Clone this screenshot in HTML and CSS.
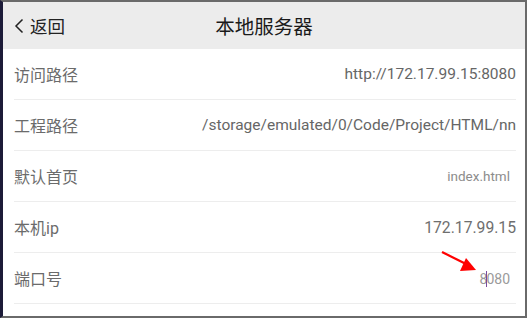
FILE: index.html
```html
<!DOCTYPE html>
<html lang="zh">
<head>
  <meta charset="UTF-8">
  <title>本地服务器</title>
  <link rel="stylesheet" href="styles.css">
</head>
<body>
  <div class="frame">
    <div class="header">
      <div class="back">
        <svg class="back-icon" width="10" height="16" viewBox="0 0 10 16">
          <path d="M8.5 1.5 L2 8 L8.5 14.5" fill="none" stroke="#222" stroke-width="1.5"/>
        </svg>
        <span>返回</span>
      </div>
      <div class="title">本地服务器</div>
    </div>
    <div class="list">
      <div class="row">
        <span class="label">访问路径</span>
        <span class="value">http://172.17.99.15:8080</span>
      </div>
      <div class="row">
        <span class="label">工程路径</span>
        <span class="value">/storage/emulated/0/Code/Project/HTML/nn</span>
      </div>
      <div class="row">
        <span class="label">默认首页</span>
        <span class="value input">index.html</span>
      </div>
      <div class="row">
        <span class="label">本机ip</span>
        <span class="value big">172.17.99.15</span>
      </div>
      <div class="row">
        <span class="label">端口号</span>
        <span class="value input port">8<i class="caret"></i>080</span>
        <svg class="arrow" width="40" height="26" viewBox="0 0 40 26">
          <line x1="1" y1="2" x2="25" y2="14" stroke="#f00" stroke-width="2.2"/>
          <polygon points="35,20 19,21 25,8" fill="#f00"/>
        </svg>
      </div>
    </div>
  </div>
</body>
</html>
```

FILE: styles.css
```css
* { margin: 0; padding: 0; box-sizing: border-box; }
body {
  font-family: 'Roboto', 'Noto Sans CJK SC', sans-serif;
  background: #fff;
}
.frame {
  width: 527px;
  height: 318px;
  border-left: 3px solid #1c1b38;
  border-top: 2px solid #6a6a6a;
  border-right: 2px solid #6a6a6a;
  border-bottom: 2px solid #6a6a6a;
  overflow: hidden;
  position: relative;
}
.header {
  height: 47px;
  background: #ececec;
  display: flex;
  align-items: center;
  position: relative;
}
.back {
  display: flex;
  align-items: center;
  gap: 6px;
  padding-left: 11px;
  font-size: 17.5px;
  color: #222;
}
.title {
  position: absolute;
  left: 0;
  right: 0;
  text-align: center;
  font-size: 19.5px;
  color: #1a1a1a;
  pointer-events: none;
}
.list {
  padding: 0 9px 0 11px;
}
.row {
  height: 51px;
  border-bottom: 1px solid #ededed;
  display: flex;
  align-items: center;
  justify-content: space-between;
  position: relative;
}
.label {
  font-size: 16px;
  color: #6b6b6b;
}
.value {
  font-size: 15.5px;
  color: #666;
}
.value.big {
  font-size: 15.7px;
  color: #6e6e6e;
}
.value.input {
  font-size: 13.5px;
  color: #8c8c8c;
  padding-right: 6px;
}
.value.port {
  font-size: 14px;
  color: #9a9a9a;
  padding-right: 6px;
  padding-top: 2px;
}
.caret {
  display: inline-block;
  width: 1px;
  height: 16px;
  background: #7b4b9c;
  vertical-align: -3px;
  margin: 0 -1px 0 -1px;
}
.arrow {
  position: absolute;
  left: 427px;
  top: -3px;
}
```
